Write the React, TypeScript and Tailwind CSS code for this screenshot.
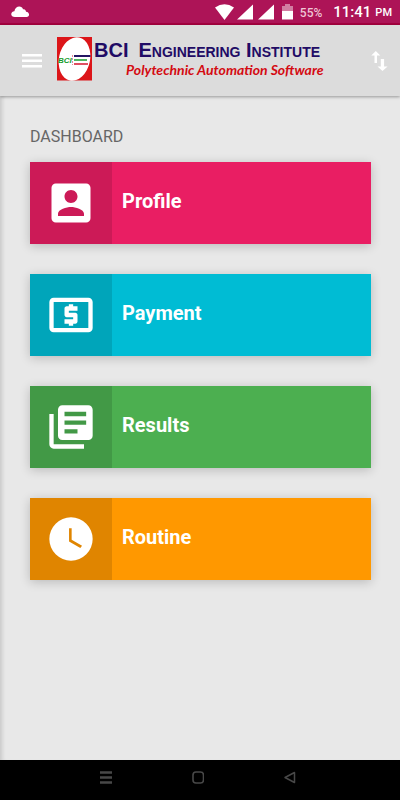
import React from "react";

type Item = { label: string; tile: string; icon: React.ReactNode };

const items: Item[] = [
  {
    label: "Profile",
    tile: "bg-[#e91e63]",
    icon: <path d="M3 5v14c0 1.1.89 2 2 2h14c1.1 0 2-.9 2-2V5c0-1.1-.9-2-2-2H5c-1.11 0-2 .9-2 2zm12 4c0 1.66-1.34 3-3 3s-3-1.34-3-3 1.34-3 3-3 3 1.34 3 3zm-9 8c0-2 4-3.1 6-3.1s6 1.1 6 3.1v1H6v-1z" />,
  },
  {
    label: "Payment",
    tile: "bg-[#00bcd4]",
    icon: <path d="M11 17h2v-1h1c.55 0 1-.45 1-1v-3c0-.55-.45-1-1-1h-3v-1h4V8h-2V7h-2v1h-1c-.55 0-1 .45-1 1v3c0 .55.45 1 1 1h3v1H9v2h2v1zm9-13H4c-1.11 0-1.99.89-1.99 2L2 18c0 1.11.89 2 2 2h16c1.11 0 2-.89 2-2V6c0-1.11-.89-2-2-2zm0 14H4V6h16v12z" />,
  },
  {
    label: "Results",
    tile: "bg-[#4caf50]",
    icon: <path d="M4 6H2v14c0 1.1.9 2 2 2h14v-2H4V6zm16-4H8c-1.1 0-2 .9-2 2v12c0 1.1.9 2 2 2h12c1.1 0 2-.9 2-2V4c0-1.1-.9-2-2-2zm-1 9H9V9h10v2zm-4 4H9v-2h6v2zm4-8H9V5h10v2z" />,
  },
  {
    label: "Routine",
    tile: "bg-[#ff9800]",
    icon: <path fillRule="evenodd" d="M12 2a10 10 0 1 0 0 20a10 10 0 1 0 0-20zm4.300 14.200L11.100 13.100V7h1.200v5.400l4.800 2.700z" />,
  },
];

function StatusBar() {
  return (
    <div className="flex h-[25px] items-center border-b-2 border-[#a5003f] bg-[#ad1457] pr-2 pl-[11px] text-white">
      <svg className="h-3 w-[19px]" viewBox="0 0 19 12" fill="currentColor" aria-hidden="true">
        <path d="M4 11C-.8 11-1 5.800 3.400 5.300C4-.5 11-.8 12 3.200c2.200-.4 3 1.300 3 2.500c4 .3 4 5.300.6 5.300z" />
      </svg>
      <div className="ml-auto flex items-center">
        <svg className="h-4 w-[78px]" viewBox="0 0 78 16" fill="currentColor" aria-hidden="true">
          <path d="M0 3.500Q9.500-3 19 3.500L9.500 16z" />
          <path d="M38 .5V15.500H22z" />
          <path d="M59 .5V15.500H43z" />
          <path opacity=".45" d="M70 0h5v2h3v6H67V2h3z" />
          <path d="M67 7h11v8.500H67z" />
        </svg>
        <span className="ml-[7px] pt-[2px] font-['Roboto'] text-xs font-medium text-[#efc6d5]">55%</span>
        <span className="ml-[11px] pt-[2px] font-['Roboto'] text-[15px] font-medium">11:41</span>
        <span className="ml-1 pt-1 font-['Roboto'] text-[11px] font-medium">PM</span>
      </div>
    </div>
  );
}

function Logo() {
  return (
    <svg className="h-11 w-9 shrink-0" viewBox="0 0 36 44" aria-hidden="true">
      <path fill="#dc1519" d="M1 0h35v43.500H1z" />
      <ellipse cx="18.500" cy="22" rx="15.500" ry="22" fill="#fff" transform="rotate(12 18.500 22)" />
      <text x="2" y="26" fontSize="8" fontWeight="700" fontStyle="italic" fill="#169c2b" className="font-['Liberation_Sans',sans-serif]">BCI</text>
      <path stroke="#e58c98" strokeWidth="1" strokeDasharray="2 1" d="M16.500 18v10" />
      <path stroke="#241563" strokeWidth="2" d="M18 19H34.500" />
      <path stroke="#169c2b" strokeWidth="1.500" d="M18 23h13" />
      <path stroke="#d5152d" strokeWidth="1.500" d="M18 27H32" />
    </svg>
  );
}

function Header() {
  return (
    <header className="relative flex h-[71px] items-center bg-[#dcdcdc] pr-3 pl-[22px] shadow-[0_1px_3px_rgba(0,0,0,0.35)]">
      <button type="button" aria-label="Open menu" className="text-white">
        <svg className="h-[14px] w-5" viewBox="0 0 20 14" fill="currentColor" aria-hidden="true">
          <path d="M0 0h20v2.600H0zM0 5.500h20v2.600H0zM0 11h20v2.600H0z" />
        </svg>
      </button>
      <div className="ml-[14px] flex min-w-0 flex-1 pb-1">
        <Logo />
        <div className="ml-[2px] pt-px whitespace-nowrap">
          <h1 className="flex gap-[10px] font-['Liberation_Sans',sans-serif] text-xl leading-6 font-bold text-[#210b65]">
            <span>BCI</span>
            <span className="[font-variant-caps:small-caps]">Engineering Institute</span>
          </h1>
          <p className="pl-8 font-['Lato','Open_Sans',sans-serif] text-sm leading-4 font-bold text-[#d40b12] italic">
            Polytechnic Automation Software
          </p>
        </div>
      </div>
      <button type="button" aria-label="Sync data" className="text-white">
        <svg className="h-5 w-[17px]" viewBox="0 0 17 20" fill="currentColor" aria-hidden="true">
          <path d="M3.500 12V4.500H.3L4.800 0l4.500 4.500H6v7.500zM9.800 8h3.300v7.500h3.500L11.500 20 6.500 15.500h3.300z" />
        </svg>
      </button>
    </header>
  );
}

export default function App() {
  return (
    <div className="flex min-h-screen flex-col bg-[#e8e8e8] font-['Roboto',sans-serif]">
      <StatusBar />
      <Header />
      <main className="flex-1 pt-[29px] pr-[29px] pb-8 pl-[30px] shadow-[inset_5px_0_4px_-3px_rgba(0,0,0,0.14)]">
        <h2 className="text-base leading-6 text-[#666]">DASHBOARD</h2>
        <nav className="mt-[13px] flex flex-col gap-[30px]">
          {items.map(({ label, tile, icon }) => (
            <button
              key={label}
              type="button"
              className={`flex h-[82px] w-full items-stretch text-left text-white shadow-[0_2px_10px_rgba(0,0,0,0.2)] ${tile}`}
            >
              <span className="flex w-[82px] items-center justify-center bg-black/12">
                <svg className="size-[52px]" viewBox="0 0 24 24" fill="currentColor" aria-hidden="true">
                  {icon}
                </svg>
              </span>
              <span className="px-[10px] pt-[25px] text-xl leading-7 font-bold">{label}</span>
            </button>
          ))}
        </nav>
      </main>
      <footer className="flex h-10 items-start justify-center gap-20 bg-black pt-[11px] pr-1 text-[#484848]">
        <button type="button" aria-label="Recent apps">
          <svg className="h-[14px] w-3" viewBox="0 0 12 14" fill="none" stroke="currentColor" strokeWidth="2.500" aria-hidden="true">
            <path d="M0 1.500h12M0 6.500h12M0 11.500h12" />
          </svg>
        </button>
        <button type="button" aria-label="Home">
          <svg className="h-[14px] w-3" viewBox="0 0 12 14" fill="none" stroke="currentColor" strokeWidth="1.600" aria-hidden="true">
            <rect x="1" y="1" width="10.500" height="11" rx="3" />
          </svg>
        </button>
        <button type="button" aria-label="Back">
          <svg className="h-[14px] w-3" viewBox="0 0 12 14" fill="none" stroke="currentColor" strokeWidth="1.500" strokeLinejoin="round" aria-hidden="true">
            <path d="M1 6.500L10.500 1.500v10z" />
          </svg>
        </button>
      </footer>
    </div>
  );
}
